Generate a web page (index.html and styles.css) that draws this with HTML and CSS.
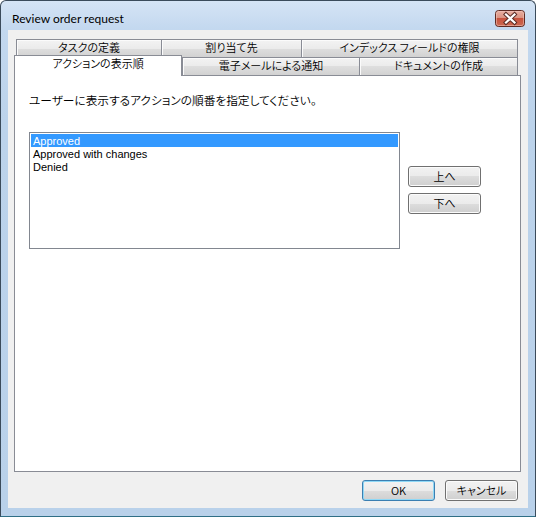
FILE: index.html
```html
<!DOCTYPE html>
<html lang="ja">
<head>
<meta charset="utf-8">
<title>Review order request</title>
<link rel="stylesheet" href="styles.css">
</head>
<body>
<div class="window">
  <div class="titlebar">
    <span class="title">Review order request</span>
    <span class="close">
      <svg width="30" height="17" viewBox="0 0 30 17">
        <defs>
          <linearGradient id="cg" x1="0" y1="0" x2="0" y2="1">
            <stop offset="0" stop-color="#e9b0a3"/>
            <stop offset="0.5" stop-color="#d8907f"/>
            <stop offset="0.5" stop-color="#c7533e"/>
            <stop offset="1" stop-color="#cc6a53"/>
          </linearGradient>
        </defs>
        <rect x="0.5" y="0.5" width="29" height="16" rx="3" fill="url(#cg)" stroke="#5e2b23"/>
        <rect x="1.5" y="1.5" width="27" height="14" rx="2" fill="none" stroke="#f3c9bf" stroke-opacity="0.55"/>
        <path d="M11 4.5 L19.5 12.5 M19.5 4.5 L11 12.5" stroke="#5a2c25" stroke-width="4.2" stroke-linecap="square"/>
        <path d="M11 4.5 L19.5 12.5 M19.5 4.5 L11 12.5" stroke="#ffffff" stroke-width="2.2" stroke-linecap="square"/>
      </svg>
    </span>
  </div>
  <div class="client">
    <div class="tabs">
      <div class="tabrow row1">
        <div class="tab w1">タスクの定義</div>
        <div class="tab w2">割り当て先</div>
        <div class="tab w3 last">インデックス フィールドの権限</div>
      </div>
      <div class="tabrow row2">
        <div class="tab w4 selected">アクションの表示順</div>
        <div class="tab w5">電子メールによる通知</div>
        <div class="tab w6 last">ドキュメントの作成</div>
      </div>
    </div>
    <div class="panel">
      <p class="label">ユーザーに表示するアクションの順番を指定してください。</p>
      <div class="listarea">
        <ul class="listbox">
          <li class="sel">Approved</li>
          <li>Approved with changes</li>
          <li>Denied</li>
        </ul>
        <div class="movebtns">
          <button class="btn">上へ</button>
          <button class="btn">下へ</button>
        </div>
      </div>
    </div>
    <div class="footer">
      <button class="btn default">OK</button>
      <button class="btn">キャンセル</button>
    </div>
  </div>
</div>
</body>
</html>
```

FILE: styles.css
```css
* { box-sizing: border-box; }
html, body { margin: 0; padding: 0; background: #ffffff; }
body {
  font-family: "Noto Sans CJK JP", "Noto Sans", sans-serif;
  font-size: 12px;
  font-weight: 350;
  font-feature-settings: "palt";
  color: #000;
}
.window {
  width: 536px;
  height: 517px;
  border: 1px solid #3b4b5b;
  border-bottom-color: #2f6f86;
  border-radius: 6px 6px 0 0;
  background: linear-gradient(#d5e4f5 0, #c3d8ef 28px, #bcd3eb 120px, #b9d1ea 100%);
  display: flex;
  flex-direction: column;
  overflow: hidden;
}
.titlebar {
  height: 29px;
  display: flex;
  justify-content: space-between;
  align-items: flex-start;
  padding: 0 10px 0 11px;
}
.title {
  font-family: Lato, "Noto Sans", sans-serif;
  font-weight: 400;
  font-size: 12px;
  line-height: 15px;
  margin-top: 10px;
  color: #000;
}
.close { display: block; margin-top: 9px; width: 30px; height: 17px; }
.close svg { display: block; }
.client {
  margin: 0 7px;
  height: 478px;
  background: #f0f0f0;
  display: flex;
  flex-direction: column;
  padding: 9px 7px 7px 6px;
}
.tabs { display: flex; flex-direction: column; }
.tabrow { display: flex; height: 18px; }
.row1 { margin-left: 2px; }
.tab {
  height: 18px;
  border: 1px solid #898c95;
  border-bottom: none;
  border-right: none;
  background: linear-gradient(#f3f3f3, #ebebeb 50%, #dedede 50%, #d2d2d2);
  box-shadow: inset 1px 1px 0 #fbfbfb;
  text-align: center;
  font-size: 11px;
  line-height: 15px;
  white-space: nowrap;
  overflow: hidden;
}
.tab.last { border-right: 1px solid #898c95; }
.w1 { width: 145px; }
.w2 { width: 140px; }
.w3 { width: 217px; }
.w4 { width: 168px; }
.w5 { width: 177px; }
.w6 { width: 159px; }
.tab.selected {
  background: #ffffff;
  box-shadow: none;
  border-right: 1px solid #898c95;
  height: 21px;
  margin-top: -2px;
  margin-bottom: -1px;
  position: relative;
  z-index: 1;
}
.panel {
  width: 507px;
  height: 397px;
  background: #ffffff;
  border: 1px solid #898c95;
  padding: 16px 0 0 14px;
}
.label { margin: 0; line-height: 15px; font-size: 11.7px; }
.listarea {
  display: flex;
  align-items: flex-start;
  gap: 8px;
  margin-top: 25px;
}
.listbox {
  width: 371px;
  height: 117px;
  border: 1px solid #828790;
  margin: 0;
  padding: 1px;
  list-style: none;
  font-family: "Liberation Sans", Arial, sans-serif;
  font-weight: 400;
  font-size: 11px;
}
.listbox li {
  height: 13px;
  padding: 1px 0 0 2px;
  line-height: 12px;
  white-space: nowrap;
}
.listbox li.sel { background: #3399ff; color: #ffffff; }
.movebtns {
  display: flex;
  flex-direction: column;
  gap: 6px;
  margin-top: 34px;
}
.btn {
  width: 73px;
  height: 21px;
  border: 1px solid #707070;
  border-radius: 3px;
  background: linear-gradient(#f2f2f2, #ebebeb 50%, #dddddd 50%, #cfcfcf);
  box-shadow: inset 0 0 0 1px #fbfbfb;
  font-family: inherit;
  font-weight: 350;
  font-size: 11px;
  font-feature-settings: "palt";
  line-height: 19px;
  padding: 0;
  color: #000;
}
.btn.default {
  border-color: #3c7fb1;
  box-shadow: inset 0 0 0 1px #8fd8f6;
}
.footer {
  display: flex;
  justify-content: flex-end;
  gap: 10px;
  margin-top: 8px;
  padding-right: 3px;
}
```
